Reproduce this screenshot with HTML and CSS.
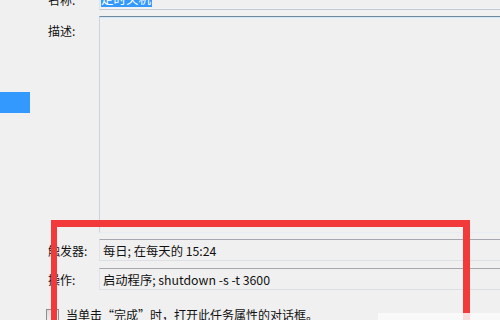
FILE: index.html
```html
<!DOCTYPE html>
<html lang="zh-CN">
<head>
<meta charset="utf-8">
<title>创建基本任务向导 - 完成</title>
<link rel="stylesheet" href="styles.css">
</head>
<body>
<div class="wizard">
  <aside class="steps">
    <div class="step active"></div>
  </aside>
  <main class="form">
    <div class="row name-row">
      <label class="lbl">名称:</label>
      <div class="box name-box"><span class="sel">定时关机</span></div>
    </div>
    <div class="row desc-row">
      <label class="lbl">描述:</label>
      <div class="box desc-box"></div>
    </div>
    <div class="row field-row">
      <label class="lbl">触发器:</label>
      <div class="box field">每日; 在每天的 15:24</div>
    </div>
    <div class="row field-row">
      <label class="lbl">操作:</label>
      <div class="box field">启动程序; shutdown -s -t 3600</div>
    </div>
    <div class="check-row">
      <span class="checkbox"></span>
      <span class="check-text">当单击“完成”时，打开此任务属性的对话框。</span>
    </div>
  </main>
</div>
<div class="annot"></div>
<div class="watermark"></div>
</body>
</html>
```

FILE: styles.css
```css
html, body {
  margin: 0;
  padding: 0;
  width: 500px;
  height: 320px;
  overflow: hidden;
  background: #f0f0f0;
  font-family: "Noto Sans CJK SC", "Microsoft YaHei", sans-serif;
  font-size: 12px;
  color: #111;
}

.wizard {
  display: flex;
  width: 520px;
}

.steps {
  width: 30px;
  flex: none;
}

.step.active {
  margin-top: 92px;
  height: 21px;
  background: #3399ff;
}

.form {
  flex: 1;
  padding-left: 18px;
  margin-top: -12px;
  display: flex;
  flex-direction: column;
}

.row {
  display: flex;
  align-items: center;
}

.lbl {
  width: 51px;
  flex: none;
  line-height: 16px;
  padding-top: 1px;
}

.box {
  flex: 1;
  box-sizing: border-box;
  border-top: 1px solid #abadb3;
  border-left: 1px solid #e2e3ea;
  border-right: 1px solid #e2e3ea;
  border-bottom: 1px solid #e3e9ef;
  background: #f0f0f0;
}

.name-box {
  height: 22px;
  display: flex;
  align-items: center;
  padding-left: 1px;
  border-bottom: 1px solid #c3c9cf;
  box-shadow: inset 0 -1px 0 #eef4fa;
}

.sel {
  background: #3399ff;
  color: #fff;
  line-height: 16px;
  font-size: 12.5px;
  padding-right: 1px;
}

.desc-row {
  align-items: flex-start;
  margin-top: 6px;
}

.desc-row .lbl {
  margin-top: 6px;
}

.desc-box {
  height: 217px;
  border-top: 1px solid #6f8a9e;
  border-left: 1px solid #c9d5df;
  border-bottom: 1px solid #e6ecf2;
  box-shadow: inset 0 1px 0 #d6e6f3, inset 0 2px 0 #e8f1f8;
}

.field-row {
  margin-top: 6px;
}

.field-row + .field-row {
  margin-top: 7px;
}

.field {
  height: 22px;
  line-height: 22px;
  font-size: 12.3px;
  padding-left: 3px;
  border-top: 1px solid #a6a8ae;
  border-bottom: 1px solid #dcdfe4;
  white-space: nowrap;
}

.check-row {
  display: flex;
  align-items: center;
  margin-top: 17px;
  margin-left: -2px;
}

.checkbox {
  width: 11px;
  height: 11px;
  flex: none;
  border: 1px solid #8e8f8f;
  background: linear-gradient(135deg, #dcdcdc, #fbfbfb);
}

.check-text {
  margin-left: 7px;
  line-height: 16px;
  font-size: 12px;
}

.annot {
  position: absolute;
  left: 51px;
  top: 220px;
  width: 419px;
  height: 140px;
  box-sizing: border-box;
  border: 7px solid #f23a3a;
  border-left-width: 6px;
}

.watermark {
  position: absolute;
  left: 378px;
  top: 313px;
  width: 122px;
  height: 7px;
  background: rgba(250, 250, 250, 0.85);
}
```
